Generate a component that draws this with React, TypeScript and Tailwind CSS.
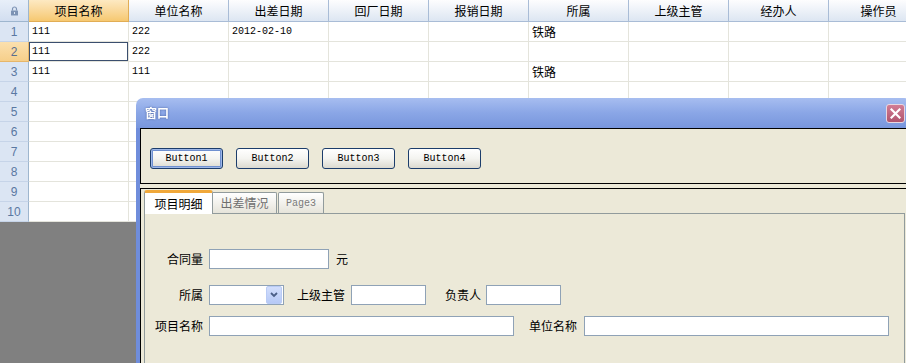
import React from "react";

const columns = ["项目名称", "单位名称", "出差日期", "回厂日期", "报销日期", "所属", "上级主管", "经办人", "操作员"];

const rows: string[][] = [
  ["111", "222", "2012-02-10", "", "", "铁路"],
  ["111", "222"],
  ["111", "111", "", "", "", "铁路"],
  [], [], [], [], [], [], [],
];

const mono = "font-['Liberation_Mono',monospace] text-[10px]";
const cjk = "font-['Noto_Sans_CJK_SC','Liberation_Sans',sans-serif] text-[12px]";

function LockIcon() {
  return (
    <svg width="9" height="10" viewBox="0 0 9 10">
      <path d="M2.5 4.5V3a2 2 0 0 1 4 0v1.5" fill="none" stroke="#7d93b4" strokeWidth="1.2" />
      <rect x="1" y="4.5" width="7" height="5" rx="0.5" fill="#7d93b4" />
      <rect x="4" y="6" width="1" height="2" fill="#dbe5f3" />
    </svg>
  );
}

function Grid() {
  return (
    <div className="w-max bg-white">
      {/* 表头 */}
      <div className="flex h-[22px]">
        <div className="w-[29px] flex items-center justify-center border-r border-b border-[#9eb6ce] bg-linear-to-b from-[#e8eff9] to-[#d2def0]">
          <LockIcon />
        </div>
        {columns.map((c, i) => (
          <div
            key={c}
            className={
              i === 0
                ? `w-[100px] flex items-center justify-center border-r border-b border-[#e1ad55] bg-linear-to-b from-[#fde9c2] to-[#f6c870] text-black ${cjk}`
                : `w-[100px] flex items-center justify-center border-r border-b border-[#a9bcd6] bg-linear-to-b from-[#fdfdfe] to-[#dde6f2] text-black ${cjk}`
            }
          >
            {c}
          </div>
        ))}
      </div>
      {rows.map((r, ri) => (
        <div key={ri} className="flex h-[20px]">
          <div
            className={
              ri === 1
                ? "w-[29px] flex items-center justify-center border-r border-b border-[#e6b66a] bg-linear-to-b from-[#fbe0ae] to-[#f6cf8a] text-[#5a6f8e] text-[12px] font-['Liberation_Sans',sans-serif]"
                : "w-[29px] flex items-center justify-center border-r border-b border-r-[#9eb6ce] border-b-[#c6d4e8] bg-[#dbe5f3] text-[#5a78a2] text-[12px] font-['Liberation_Sans',sans-serif]"
            }
          >
            {ri + 1}
          </div>
          {columns.map((_, ci) => {
            const v = r[ci] ?? "";
            const ascii = /^[\x00-\x7f]*$/.test(v);
            return (
              <div
                key={ci}
                className={`w-[100px] flex items-center pl-[3px] border-r border-b border-[#e4e4dc] text-black ${ascii ? mono : cjk} ${
                  ri === 1 && ci === 0 ? "shadow-[inset_0_0_0_1px_#3b4f6e]" : ""
                }`}
              >
                {v}
              </div>
            );
          })}
        </div>
      ))}
    </div>
  );
}

function XpButton({ label, focused }: { label: string; focused?: boolean }) {
  return (
    <button
      className={`w-[73px] h-[21px] rounded-[3px] border border-[#1c3d6b] bg-linear-to-b from-[#ffffff] via-[#f4f4f0] to-[#dcdad0] text-black ${mono} ${
        focused ? "shadow-[inset_0_0_0_1px_#9fb8e8,inset_0_0_0_2px_#6f90d0]" : ""
      }`}
    >
      {label}
    </button>
  );
}

function Field({ className }: { className: string }) {
  return <input type="text" readOnly className={`block h-[20px] border border-[#8fa2b6] bg-white outline-none ${className}`} />;
}

function Label({ text, className = "" }: { text: string; className?: string }) {
  return <span className={`block h-[20px] leading-[20px] text-black ${cjk} ${className}`}>{text}</span>;
}

function Window() {
  return (
    <div className="absolute left-[136px] top-[98px] w-[775px] flex flex-col">
      <div className="shrink-0 h-[30px] rounded-t-[7px] bg-linear-to-b from-[#a7bdf0] via-[#8aa6e6] to-[#7896dd] flex items-center justify-between pl-[9px] pr-[6px]">
        <span className={`text-white font-bold ${cjk} drop-shadow-[0_0_1px_rgba(40,60,120,0.6)]`}>窗口</span>
        <div className="w-[19px] h-[19px] rounded-[3px] border border-[#e8d6e0] bg-linear-to-b from-[#d27c94] to-[#b0546e] flex items-center justify-center">
          <svg width="11" height="11" viewBox="0 0 11 11">
            <path d="M1.5 1.5l8 8M9.5 1.5l-8 8" stroke="white" strokeWidth="2.2" strokeLinecap="square" />
          </svg>
        </div>
      </div>
      <div className="border-l-4 border-[#6f8ddb] bg-[#ece9d8] flex flex-col">
        {/* 按钮面板 */}
        <div className="shrink-0 h-[56px] border border-black flex items-start gap-[13px] pl-[9px] pt-[19px]">
          <XpButton label="Button1" focused />
          <XpButton label="Button2" />
          <XpButton label="Button3" />
          <XpButton label="Button4" />
        </div>
        {/* 标签页面板 */}
        <div className="shrink-0 mt-[4px] border border-black pt-[1px] pl-[3px]">
          <div className="flex items-end h-[23px]">
            <div className={`relative z-10 w-[69px] h-[24px] -mb-px flex items-center justify-center bg-white border-x border-[#919b9c] border-t-[3px] border-t-[#f0a83a] rounded-t-[3px] text-black ${cjk}`}>
              项目明细
            </div>
            <div className={`w-[64px] h-[21px] flex items-center justify-center bg-linear-to-b from-[#ffffff] to-[#e6e4da] border-t border-r border-[#919b9c] rounded-tr-[2px] text-[#6e6e6e] ${cjk}`}>
              出差情况
            </div>
            <div className={`ml-[1px] w-[46px] h-[21px] flex items-center justify-center bg-linear-to-b from-[#ffffff] to-[#e6e4da] border-t border-x border-[#919b9c] rounded-t-[2px] text-[#7a7a7a] ${mono}`}>
              Page3
            </div>
          </div>
          <div className="w-[761px] h-[200px] border border-[#919b9c] bg-[#ece9d8] pt-[35px]">
            <div className="flex items-center h-[20px]">
              <Label text="合同量" className="w-[58px] text-right mr-[6px]" />
              <Field className="w-[120px]" />
              <Label text="元" className="ml-[7px]" />
            </div>
            <div className="flex items-center h-[20px] mt-[16px]">
              <Label text="所属" className="w-[58px] text-right mr-[6px]" />
              <div className="w-[75px] h-[20px] border border-[#8fa2b6] bg-white flex justify-end pr-[1px]">
                <div className="w-[16px] h-[18px] rounded-[2px] border border-[#b9cbf5] bg-linear-to-b from-[#d2defc] to-[#b6c9f6] flex items-center justify-center">
                  <svg width="8" height="6" viewBox="0 0 8 6">
                    <path d="M1 1l3 3 3-3" fill="none" stroke="#4b5f87" strokeWidth="1.8" />
                  </svg>
                </div>
              </div>
              <Label text="上级主管" className="ml-[13px]" />
              <Field className="ml-[6px] w-[75px]" />
              <Label text="负责人" className="ml-[19px]" />
              <Field className="ml-[5px] w-[75px]" />
            </div>
            <div className="flex items-center h-[20px] mt-[11px]">
              <Label text="项目名称" className="w-[58px] text-right mr-[6px]" />
              <Field className="w-[305px]" />
              <Label text="单位名称" className="ml-[15px]" />
              <Field className="ml-[7px] w-[305px]" />
            </div>
          </div>
        </div>
      </div>
    </div>
  );
}

export default function App() {
  return (
    <div className="relative w-[906px] h-[363px] overflow-hidden bg-[#808080]">
      <Grid />
      <Window />
    </div>
  );
}
